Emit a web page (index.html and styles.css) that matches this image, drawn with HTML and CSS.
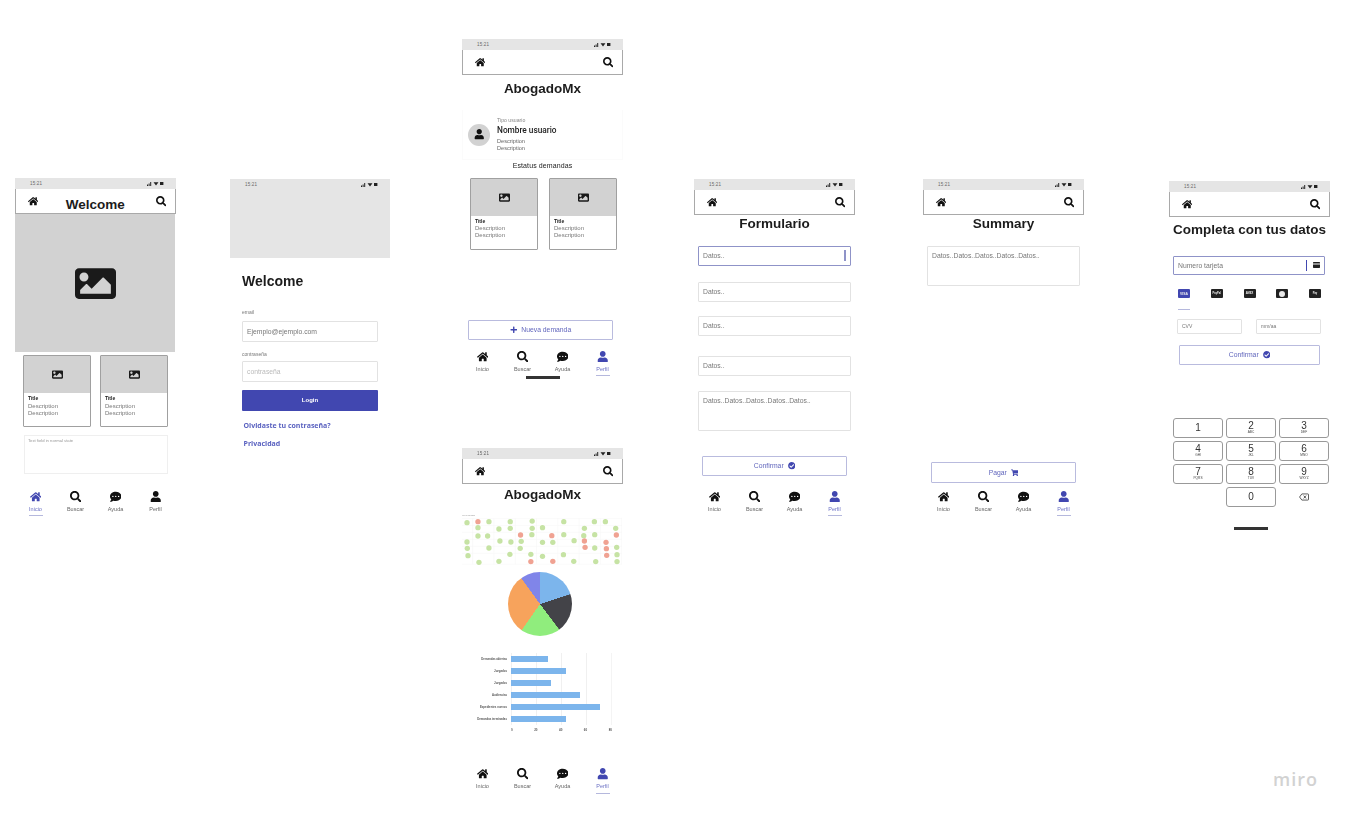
FILE: index.html
```html
<!DOCTYPE html>
<html lang="en">
<head>
    <meta charset="UTF-8">
    <title>AbogadoMx wireframes</title>
    <link rel="stylesheet" href="styles.css">
</head>
<body>
    <!-- icon set, used through <use> below -->
    <svg class="icon-defs">
        <symbol id="i-home" viewBox="0 0 576 512"><path d="M280.37 148.26L96 300.11V464a16 16 0 0 0 16 16l112.06-.29a16 16 0 0 0 15.92-16V368a16 16 0 0 1 16-16h64a16 16 0 0 1 16 16v95.64a16 16 0 0 0 16 16.05L464 480a16 16 0 0 0 16-16V300L295.67 148.26a12.19 12.19 0 0 0-15.3 0zM571.6 251.47L488 182.56V44.05a12 12 0 0 0-12-12h-56a12 12 0 0 0-12 12v72.61L318.47 43a48 48 0 0 0-61 0L4.34 251.47a12 12 0 0 0-1.6 16.9l25.5 31A12 12 0 0 0 45.15 301l235.22-193.74a12.19 12.19 0 0 1 15.3 0L530.9 301a12 12 0 0 0 16.9-1.6l25.5-31a12 12 0 0 0-1.7-16.93z"/></symbol>
        <symbol id="i-search" viewBox="0 0 512 512"><path d="M505 442.7L405.3 343c-4.5-4.5-10.6-7-17-7H372c27.6-35.3 44-79.7 44-128C416 93.1 322.9 0 208 0S0 93.1 0 208s93.1 208 208 208c48.3 0 92.7-16.4 128-44v16.3c0 6.4 2.5 12.5 7 17l99.7 99.7c9.4 9.4 24.6 9.4 33.9 0l28.3-28.3c9.4-9.4 9.4-24.6.1-34zM208 336c-70.7 0-128-57.2-128-128 0-70.7 57.2-128 128-128 70.7 0 128 57.2 128 128 0 70.7-57.2 128-128 128z"/></symbol>
        <symbol id="i-chat" viewBox="0 0 512 512"><path d="M256 32C114.6 32 0 125.1 0 240c0 49.6 21.4 95 57 130.7C44.5 421.1 2.7 466 2.2 466.5c-2.2 2.3-2.8 5.7-1.5 8.7S4.8 480 8 480c66.3 0 116-31.8 140.6-51.4 32.7 12.3 69 19.4 107.4 19.4 141.4 0 256-93.1 256-208S397.4 32 256 32zM128 272c-17.7 0-32-14.3-32-32s14.3-32 32-32 32 14.3 32 32-14.3 32-32 32zm128 0c-17.7 0-32-14.3-32-32s14.3-32 32-32 32 14.3 32 32-14.3 32-32 32zm128 0c-17.7 0-32-14.3-32-32s14.3-32 32-32 32 14.3 32 32-14.3 32-32 32z"/></symbol>
        <symbol id="i-user" viewBox="0 0 448 512"><path d="M224 256c70.7 0 128-57.3 128-128S294.7 0 224 0 96 57.3 96 128s57.3 128 128 128zm89.6 32h-16.7c-22.2 10.2-46.9 16-72.9 16s-50.6-5.8-72.9-16h-16.7C60.2 288 0 348.2 0 422.4V464c0 26.5 21.5 48 48 48h352c26.5 0 48-21.5 48-48v-41.6c0-74.2-60.2-134.4-134.4-134.4z"/></symbol>
        <symbol id="i-image" viewBox="0 0 512 512"><path d="M464 448H48c-26.51 0-48-21.49-48-48V112c0-26.51 21.49-48 48-48h416c26.51 0 48 21.49 48 48v288c0 26.51-21.49 48-48 48zM112 120c-30.928 0-56 25.072-56 56s25.072 56 56 56 56-25.072 56-56-25.072-56-56-56zM64 384h384V272l-87.515-87.515c-4.686-4.686-12.284-4.686-16.971 0L208 320l-55.515-55.515c-4.686-4.686-12.284-4.686-16.971 0L64 336v48z"/></symbol>
        <symbol id="i-plus" viewBox="0 0 448 512"><path d="M416 208H272V64c0-17.67-14.33-32-32-32h-32c-17.67 0-32 14.33-32 32v144H32c-17.67 0-32 14.33-32 32v32c0 17.67 14.33 32 32 32h144v144c0 17.67 14.33 32 32 32h32c17.67 0 32-14.33 32-32V304h144c17.67 0 32-14.33 32-32v-32c0-17.67-14.33-32-32-32z"/></symbol>
        <symbol id="i-check" viewBox="0 0 512 512"><path d="M504 256c0 136.967-111.033 248-248 248S8 392.967 8 256 119.033 8 256 8s248 111.033 248 248zM227.314 387.314l184-184c6.248-6.248 6.248-16.379 0-22.627l-22.627-22.627c-6.248-6.249-16.379-6.249-22.628 0L216 308.118l-70.059-70.059c-6.248-6.248-16.379-6.248-22.628 0l-22.627 22.627c-6.248 6.248-6.248 16.379 0 22.627l104 104c6.249 6.249 16.379 6.249 22.628.001z"/></symbol>
        <symbol id="i-cart" viewBox="0 0 576 512"><path d="M528.12 301.319l47.273-208C578.806 78.301 567.391 64 551.99 64H159.208l-9.166-44.81C147.758 8.021 137.93 0 126.529 0H24C10.745 0 0 10.745 0 24v16c0 13.255 10.745 24 24 24h69.883l70.248 343.435C147.325 417.1 136 435.222 136 456c0 30.928 25.072 56 56 56s56-25.072 56-56c0-15.674-6.447-29.835-16.824-40h209.647C430.447 426.165 424 440.326 424 456c0 30.928 25.072 56 56 56s56-25.072 56-56c0-22.172-12.888-41.332-31.579-50.405l5.517-24.276c3.413-15.018-8.002-29.319-23.403-29.319H218.117l-6.545-32h293.145c11.206 0 20.92-7.754 23.403-18.681z"/></symbol>
        <symbol id="i-status" viewBox="0 0 17 5"><path d="M0 3.5h1V5H0zM1.6 2.5h1V5h-1zM3.2 1h1v4h-1zM6.5 1.2h5L9 4.6zM13 1h3.4v3H13z"/></symbol>
        <symbol id="i-card" viewBox="0 0 12 10"><path d="M1 0h10a1 1 0 0 1 1 1v1.5H0V1a1 1 0 0 1 1-1zM0 4h12v5a1 1 0 0 1-1 1H1a1 1 0 0 1-1-1z"/></symbol>
        <symbol id="i-backspace" viewBox="0 0 14 10"><path class="backspace-line" d="M4 .7h8.5a.8.8 0 0 1 .8.8v7a.8.8 0 0 1-.8.8H4L.8 5z"/><path class="backspace-line" d="M6.5 3l3.5 4M10 3L6.5 7"/></symbol>
    </svg>

    <!-- Home -->
    <section class="frame frame-home">
        <div class="status-bar"><span>15:21</span><svg class="status-icons"><use href="#i-status"/></svg></div>
        <header class="app-header">
            <svg class="icon"><use href="#i-home"/></svg>
            <h1 class="screen-title screen-title-inline">Welcome</h1>
            <svg class="icon"><use href="#i-search"/></svg>
        </header>
        <div class="hero"><svg class="hero-icon"><use href="#i-image"/></svg></div>
        <div class="card-row card-row-home">
            <article class="card">
                <div class="card-thumb"><svg class="thumb-icon"><use href="#i-image"/></svg></div>
                <h4>Title</h4><p>Description</p><p>Description</p>
            </article>
            <article class="card">
                <div class="card-thumb"><svg class="thumb-icon"><use href="#i-image"/></svg></div>
                <h4>Title</h4><p>Description</p><p>Description</p>
            </article>
        </div>
        <div class="note-field">Text field in normal state</div>
        <nav class="tab-bar tab-bar-home">
            <div class="tab tab-active"><svg class="icon"><use href="#i-home"/></svg><span>Inicio</span></div>
            <div class="tab"><svg class="icon"><use href="#i-search"/></svg><span>Buscar</span></div>
            <div class="tab"><svg class="icon"><use href="#i-chat"/></svg><span>Ayuda</span></div>
            <div class="tab"><svg class="icon"><use href="#i-user"/></svg><span>Perfil</span></div>
        </nav>
    </section>

    <!-- Login -->
    <section class="frame frame-login">
        <div class="login-banner">
            <div class="status-bar"><span>15:21</span><svg class="status-icons"><use href="#i-status"/></svg></div>
        </div>
        <form class="login-form">
            <h1 class="screen-title login-title">Welcome</h1>
            <label class="login-label login-label-first">email</label>
            <div class="login-input">Ejemplo@ejemplo.com</div>
            <label class="login-label">contraseña</label>
            <div class="login-input login-input-empty">contraseña</div>
            <div class="login-button">Login</div>
            <a class="login-link">Olvidaste tu contraseña?</a>
            <a class="login-link">Privacidad</a>
        </form>
    </section>

    <!-- Profile -->
    <section class="frame frame-profile">
        <div class="status-bar"><span>15:21</span><svg class="status-icons"><use href="#i-status"/></svg></div>
        <header class="app-header">
            <svg class="icon"><use href="#i-home"/></svg>
            <svg class="icon"><use href="#i-search"/></svg>
        </header>
        <h1 class="screen-title title-profile">AbogadoMx</h1>
        <div class="profile">
            <div class="avatar"><svg class="icon"><use href="#i-user"/></svg></div>
            <div>
                <div class="profile-type">Tipo usuario</div>
                <div class="profile-name">Nombre usuario</div>
                <p class="profile-text">Description</p>
                <p class="profile-text">Description</p>
            </div>
        </div>
        <h3 class="status-heading">Estatus demandas</h3>
        <div class="card-row card-row-profile">
            <article class="card">
                <div class="card-thumb"><svg class="thumb-icon"><use href="#i-image"/></svg></div>
                <h4>Title</h4><p>Description</p><p>Description</p>
            </article>
            <article class="card">
                <div class="card-thumb"><svg class="thumb-icon"><use href="#i-image"/></svg></div>
                <h4>Title</h4><p>Description</p><p>Description</p>
            </article>
        </div>
        <div class="outline-btn btn-new"><svg class="btn-icon"><use href="#i-plus"/></svg>Nueva demanda</div>
        <nav class="tab-bar tab-bar-profile">
            <div class="tab"><svg class="icon"><use href="#i-home"/></svg><span>Inicio</span></div>
            <div class="tab"><svg class="icon"><use href="#i-search"/></svg><span>Buscar</span></div>
            <div class="tab"><svg class="icon"><use href="#i-chat"/></svg><span>Ayuda</span></div>
            <div class="tab tab-active"><svg class="icon"><use href="#i-user"/></svg><span>Perfil</span></div>
        </nav>
        <div class="home-bar home-bar-profile"></div>
    </section>

    <!-- Stats -->
    <section class="frame frame-stats">
        <div class="status-bar"><span>15:21</span><svg class="status-icons"><use href="#i-status"/></svg></div>
        <header class="app-header">
            <svg class="icon"><use href="#i-home"/></svg>
            <svg class="icon"><use href="#i-search"/></svg>
        </header>
        <h1 class="screen-title title-stats">AbogadoMx</h1>
        <svg class="scatter" viewBox="37 225 481 150">
            <text class="scatter-title" x="38" y="229">Demandas</text>
            <path class="scatter-grid" d="M37 235H518M37 256H518M37 277H518M37 298H518M37 319H518M37 340H518M37 373H518M69 235V373M133 235V373M197 235V373M261 235V373M325 235V373M389 235V373M453 235V373M517 235V373"/>
            <g class="dots-ok">
                <circle cx="52" cy="248" r="8"/><circle cx="118" cy="245" r="8"/><circle cx="182" cy="245" r="8"/><circle cx="248" cy="243" r="8"/><circle cx="343" cy="245" r="8"/><circle cx="435" cy="245" r="8"/><circle cx="468" cy="245" r="8"/>
                <circle cx="85" cy="263" r="8"/><circle cx="148" cy="267" r="8"/><circle cx="182" cy="265" r="8"/><circle cx="248" cy="265" r="8"/><circle cx="279" cy="263" r="8"/><circle cx="405" cy="265" r="8"/><circle cx="499" cy="265" r="8"/>
                <circle cx="85" cy="288" r="8"/><circle cx="114" cy="288" r="8"/><circle cx="247" cy="284" r="8"/><circle cx="343" cy="284" r="8"/><circle cx="403" cy="287" r="8"/><circle cx="436" cy="284" r="8"/>
                <circle cx="52" cy="306" r="8"/><circle cx="151" cy="303" r="8"/><circle cx="184" cy="306" r="8"/><circle cx="215" cy="304" r="8"/><circle cx="279" cy="307" r="8"/><circle cx="310" cy="307" r="8"/><circle cx="374" cy="302" r="8"/>
                <circle cx="53" cy="325" r="8"/><circle cx="118" cy="324" r="8"/><circle cx="212" cy="325" r="8"/><circle cx="436" cy="324" r="8"/><circle cx="502" cy="322" r="8"/>
                <circle cx="55" cy="347" r="8"/><circle cx="181" cy="343" r="8"/><circle cx="244" cy="343" r="8"/><circle cx="279" cy="349" r="8"/><circle cx="342" cy="344" r="8"/><circle cx="503" cy="344" r="8"/>
                <circle cx="88" cy="367" r="8"/><circle cx="148" cy="364" r="8"/><circle cx="373" cy="364" r="8"/><circle cx="439" cy="365" r="8"/><circle cx="503" cy="365" r="8"/>
            </g>
            <g class="dots-late">
                <circle cx="85" cy="245" r="8"/><circle cx="213" cy="285" r="8"/><circle cx="307" cy="287" r="8"/><circle cx="501" cy="285" r="8"/><circle cx="405" cy="303" r="8"/><circle cx="470" cy="307" r="8"/><circle cx="407" cy="322" r="8"/><circle cx="471" cy="326" r="8"/><circle cx="472" cy="346" r="8"/><circle cx="244" cy="365" r="8"/><circle cx="310" cy="364" r="8"/>
            </g>
        </svg>
        <div class="pie"></div>
        <div class="bar-chart">
            <div class="bar-labels">
                <span>Demandas abiertas</span>
                <span>Juzgados</span>
                <span>Juzgados</span>
                <span>Audiencias</span>
                <span>Expedientes nuevos</span>
                <span>Demandas terminadas</span>
            </div>
            <div class="bar-plot">
                <div class="bar" style="width: 37px"></div>
                <div class="bar" style="width: 55px"></div>
                <div class="bar" style="width: 40px"></div>
                <div class="bar" style="width: 69px"></div>
                <div class="bar" style="width: 89px"></div>
                <div class="bar" style="width: 55px"></div>
            </div>
            <div class="bar-ticks"><span>0</span><span>20</span><span>40</span><span>60</span><span>80</span></div>
        </div>
        <nav class="tab-bar tab-bar-stats">
            <div class="tab"><svg class="icon"><use href="#i-home"/></svg><span>Inicio</span></div>
            <div class="tab"><svg class="icon"><use href="#i-search"/></svg><span>Buscar</span></div>
            <div class="tab"><svg class="icon"><use href="#i-chat"/></svg><span>Ayuda</span></div>
            <div class="tab tab-active"><svg class="icon"><use href="#i-user"/></svg><span>Perfil</span></div>
        </nav>
    </section>

    <!-- Form -->
    <section class="frame frame-form">
        <div class="status-bar"><span>15:21</span><svg class="status-icons"><use href="#i-status"/></svg></div>
        <header class="app-header">
            <svg class="icon"><use href="#i-home"/></svg>
            <svg class="icon"><use href="#i-search"/></svg>
        </header>
        <h1 class="screen-title title-form">Formulario</h1>
        <div class="field field-active field-one">Datos..<span class="caret"></span></div>
        <div class="field field-two">Datos..</div>
        <div class="field field-three">Datos..</div>
        <div class="field field-four">Datos..</div>
        <div class="field field-area field-five">Datos..Datos..Datos..Datos..Datos..</div>
        <div class="outline-btn btn-confirm">Confirmar<svg class="btn-icon"><use href="#i-check"/></svg></div>
        <nav class="tab-bar tab-bar-form">
            <div class="tab"><svg class="icon"><use href="#i-home"/></svg><span>Inicio</span></div>
            <div class="tab"><svg class="icon"><use href="#i-search"/></svg><span>Buscar</span></div>
            <div class="tab"><svg class="icon"><use href="#i-chat"/></svg><span>Ayuda</span></div>
            <div class="tab tab-active"><svg class="icon"><use href="#i-user"/></svg><span>Perfil</span></div>
        </nav>
    </section>

    <!-- Summary -->
    <section class="frame frame-summary">
        <div class="status-bar"><span>15:21</span><svg class="status-icons"><use href="#i-status"/></svg></div>
        <header class="app-header">
            <svg class="icon"><use href="#i-home"/></svg>
            <svg class="icon"><use href="#i-search"/></svg>
        </header>
        <h1 class="screen-title title-form">Summary</h1>
        <div class="field field-area field-one">Datos..Datos..Datos..Datos..Datos..</div>
        <div class="outline-btn btn-pay">Pagar<svg class="btn-icon"><use href="#i-cart"/></svg></div>
        <nav class="tab-bar tab-bar-summary">
            <div class="tab"><svg class="icon"><use href="#i-home"/></svg><span>Inicio</span></div>
            <div class="tab"><svg class="icon"><use href="#i-search"/></svg><span>Buscar</span></div>
            <div class="tab"><svg class="icon"><use href="#i-chat"/></svg><span>Ayuda</span></div>
            <div class="tab tab-active"><svg class="icon"><use href="#i-user"/></svg><span>Perfil</span></div>
        </nav>
    </section>

    <!-- Payment -->
    <section class="frame frame-payment">
        <div class="status-bar"><span>15:21</span><svg class="status-icons"><use href="#i-status"/></svg></div>
        <header class="app-header">
            <svg class="icon"><use href="#i-home"/></svg>
            <svg class="icon"><use href="#i-search"/></svg>
        </header>
        <h1 class="screen-title title-payment">Completa con tus datos</h1>
        <div class="field field-active field-card">Numero tarjeta<span class="caret caret-card"></span><svg class="card-icon"><use href="#i-card"/></svg></div>
        <div class="pay-methods">
            <div class="pay-method pay-method-active"><span class="pay-logo pay-logo-visa">VISA</span></div>
            <div class="pay-method"><span class="pay-logo">PayPal</span></div>
            <div class="pay-method"><span class="pay-logo">AMEX</span></div>
            <div class="pay-method"><span class="pay-logo"><i class="mc-ring"></i></span></div>
            <div class="pay-method"><span class="pay-logo">Pay</span></div>
        </div>
        <div class="card-extra">
            <div class="field field-small">CVV</div>
            <div class="field field-small">mm/aa</div>
        </div>
        <div class="outline-btn btn-card">Confirmar<svg class="btn-icon"><use href="#i-check"/></svg></div>
        <div class="keypad">
            <div class="key">1</div>
            <div class="key">2<small>ABC</small></div>
            <div class="key">3<small>DEF</small></div>
            <div class="key">4<small>GHI</small></div>
            <div class="key">5<small>JKL</small></div>
            <div class="key">6<small>MNO</small></div>
            <div class="key">7<small>PQRS</small></div>
            <div class="key">8<small>TUV</small></div>
            <div class="key">9<small>WXYZ</small></div>
            <div class="key-blank"></div>
            <div class="key">0</div>
            <div class="key-blank"><svg class="backspace"><use href="#i-backspace"/></svg></div>
        </div>
        <div class="home-bar home-bar-payment"></div>
    </section>

    <div class="miro-logo">miro</div>
</body>
</html>
```

FILE: styles.css
```css
* {
    box-sizing: border-box;
    margin: 0;
    padding: 0;
}

body {
    position: relative;
    width: 1348px;
    height: 817px;
    overflow: hidden;
    background: #ffffff;
    font-family: "Liberation Sans", Arial, sans-serif;
    color: #1a1a1a;
}

.icon-defs {
    display: none;
}

/* frames sit on a free board, so these are the only pixel offsets.
   the board is zoomed out, everything on it is a little soft */
.frame {
    position: absolute;
    width: 161px;
    filter: blur(.3px);
}

.frame-home { left: 15px; top: 178px; }
.frame-login { left: 230px; top: 179px; }
.frame-profile { left: 462px; top: 39px; }
.frame-stats { left: 462px; top: 448px; }
.frame-form { left: 694px; top: 179px; }
.frame-summary { left: 923px; top: 179px; }
.frame-payment { left: 1169px; top: 181px; }

.status-bar {
    display: flex;
    justify-content: space-between;
    align-items: center;
    height: 11px;
    padding: 0 12px 0 15px;
    background: #e5e5e5;
    font-size: 4.5px;
    letter-spacing: .2px;
    color: #666;
}

.status-icons {
    width: 17px;
    height: 5px;
    fill: #222;
}

.app-header {
    display: flex;
    justify-content: space-between;
    align-items: center;
    height: 25px;
    padding: 1px 9px 0 11.5px;
    background: #fff;
    border: 1px solid #a9a9a9;
    border-top: none;
}

.icon {
    width: 10.5px;
    height: 10.5px;
    fill: #111;
}

.screen-title {
    font-size: 13.5px;
    line-height: 16px;
    font-weight: bold;
    text-align: center;
    color: #1c1c1c;
}

.screen-title-inline {
    margin: 7px 3px 0 0;
}

.title-profile { margin-top: 6px; }
.title-stats { margin-top: 3px; }
.title-form { margin-top: 1px; }
.title-payment { margin-top: 5px; }

/* home */
.hero {
    display: flex;
    justify-content: center;
    align-items: center;
    width: 160px;
    height: 138px;
    background: #d2d2d2;
}

.hero-icon {
    width: 41px;
    height: 41px;
    fill: #1a1a1a;
}

.card-row {
    display: flex;
}

.card-row-home {
    gap: 9px;
    margin: 3px 0 0 8px;
}

.card-row-profile {
    gap: 11px;
    margin: 9px 0 0 8px;
}

.card {
    width: 68px;
    height: 72px;
    background: #fff;
    border: 1px solid #a0a0a0;
    border-radius: 1px;
    font-size: 6px;
    line-height: 7px;
    color: #777;
}

.card-thumb {
    display: flex;
    justify-content: center;
    align-items: center;
    height: 37px;
    background: #d2d2d2;
}

.thumb-icon {
    width: 11px;
    height: 11px;
    fill: #1a1a1a;
}

.card h4 {
    margin: 2px 0 1.5px 4px;
    font-size: 5px;
    line-height: 6px;
    color: #222;
}

.card p {
    margin-left: 4px;
}

.note-field {
    width: 144px;
    height: 39px;
    margin: 8px 0 0 9px;
    padding: 2px 3px;
    border: 1px solid #efefef;
    font-size: 4.2px;
    line-height: 5px;
    color: #999;
}

/* bottom tabs */
.tab-bar {
    display: grid;
    grid-template-columns: repeat(4, 40px);
    height: 26px;
    padding-left: .5px;
}

.tab-bar-home { margin-top: 16.5px; }
.tab-bar-profile { margin-top: 11px; }
.tab-bar-stats { margin-top: 35px; }
.tab-bar-form { margin-top: 14.5px; }
.tab-bar-summary { margin-top: 7.5px; }

.tab {
    display: flex;
    flex-direction: column;
    align-items: center;
}

.tab .icon {
    width: 11.5px;
    height: 11.5px;
}

.tab span {
    margin-top: 4.5px;
    padding-bottom: 3.5px;
    border-bottom: 1px solid transparent;
    min-width: 14px;
    font-size: 5.5px;
    line-height: 5px;
    text-align: center;
    color: #666;
}

.tab-active .icon {
    fill: #4147b0;
}

.tab-active span {
    color: #6a70c4;
    border-bottom-color: #b5b8dd;
}

.home-bar {
    width: 34px;
    height: 2.5px;
    background: #333;
}

.home-bar-profile { margin: -.5px 0 0 64px; }
.home-bar-payment { margin: 20px 0 0 65px; }

/* login */
.login-banner {
    width: 160px;
    height: 79px;
    background: #e5e5e5;
}

.login-form {
    display: flex;
    flex-direction: column;
    width: 136px;
    margin-left: 12px;
}

.login-title {
    margin-top: 15px;
    text-align: left;
    font-size: 14px;
}

.login-label {
    margin-top: 9px;
    font-size: 5px;
    line-height: 7px;
    color: #777;
}

.login-label-first {
    margin-top: 20px;
}

.login-input {
    height: 21px;
    margin-top: 5px;
    padding-left: 4px;
    border: 1px solid #e2e2e2;
    border-radius: 1px;
    font-size: 6.8px;
    line-height: 19px;
    color: #777;
}

.login-input-empty {
    margin-top: 3px;
    color: #bbb;
}

.login-button {
    height: 21px;
    margin-top: 8px;
    border-radius: 1px;
    background: #4147b0;
    font-size: 6px;
    font-weight: bold;
    line-height: 21px;
    text-align: center;
    color: #fff;
}

.login-link {
    margin: 9px 0 0 1.5px;
    font-family: "Open Sans", sans-serif;
    font-size: 7px;
    font-weight: 700;
    line-height: 9px;
    color: #5a62c0;
}

.login-link:first-of-type {
    margin-top: 10px;
}

/* profile */
.profile {
    display: flex;
    align-items: center;
    height: 50px;
    margin-top: 13px;
    padding-left: 5px;
    border: 1px solid #fbfbfb;
    border-top: none;
}

.avatar {
    display: flex;
    justify-content: center;
    align-items: center;
    width: 22px;
    height: 22px;
    margin-right: 7px;
    border-radius: 50%;
    background: #d2d2d2;
}

.profile-type {
    font-size: 5.2px;
    line-height: 5px;
    color: #888;
}

.profile-name {
    margin-top: 2px;
    font-family: Roboto, sans-serif;
    font-size: 8.3px;
    font-weight: 500;
    line-height: 11px;
    color: #222;
}

.profile-text {
    font-size: 5.6px;
    line-height: 7px;
    color: #666;
}

.profile-name + .profile-text {
    margin-top: 2px;
}

.status-heading {
    margin-top: 1.5px;
    font-size: 7px;
    font-weight: normal;
    letter-spacing: .1px;
    line-height: 7px;
    text-align: center;
    color: #222;
}

/* buttons */
.outline-btn {
    display: flex;
    justify-content: center;
    align-items: center;
    gap: 4px;
    padding-bottom: 1px;
    border: 1px solid #b9bbde;
    border-radius: 1px;
    font-size: 6.8px;
    color: #6267bd;
}

.btn-icon {
    width: 7.5px;
    height: 7.5px;
    margin-top: 1px;
    fill: #4147b0;
}

.btn-new {
    width: 145px;
    height: 20px;
    margin: 70px 0 0 6px;
}

.btn-confirm {
    width: 145px;
    height: 20px;
    margin: 25px 0 0 8px;
}

.btn-pay {
    width: 145px;
    height: 21px;
    margin: 176px 0 0 8px;
}

.btn-card {
    width: 141px;
    height: 20px;
    margin: 11px 0 0 10px;
}

/* form fields */
.field {
    display: flex;
    align-items: center;
    width: 153px;
    height: 20px;
    margin-left: 4px;
    padding: 0 4px 1px;
    border: 1px solid #e2e2e2;
    border-radius: 1px;
    font-size: 6.8px;
    color: #777;
}

.field-active {
    justify-content: space-between;
    border-color: #8f93c8;
}

.field-area {
    align-items: flex-start;
    height: 40px;
    padding-top: 5px;
    line-height: 8px;
}

.field-one { margin-top: 14px; }
.field-two { margin-top: 16px; }
.field-three { margin-top: 14px; }
.field-four { margin-top: 20px; }
.field-five { margin-top: 15px; }

.caret {
    width: 2px;
    height: 11px;
    background: #8f93c8;
}

.field-card {
    width: 152px;
    height: 19px;
    margin-top: 18px;
    padding-right: 4px;
}

.caret-card {
    width: 1px;
    margin-left: auto;
    margin-right: 6px;
    background: #4147b0;
}

.card-icon {
    width: 7px;
    height: 6px;
    fill: #222;
}

/* charts */
.scatter {
    display: block;
    width: 160px;
    height: 50px;
    margin-top: 12px;
}

.scatter-title {
    font-family: "Liberation Sans", sans-serif;
    font-size: 8px;
    fill: #999;
}

.scatter-grid {
    fill: none;
    stroke: #f5f5f5;
    stroke-width: 1.5;
}

.dots-ok { fill: #c6e3a4; }
.dots-late { fill: #f0a292; }

.pie {
    width: 64px;
    height: 64px;
    margin: 7px 0 0 46px;
    border-radius: 50%;
    background: conic-gradient(#7cb5ec 0 71.6deg, #434348 72.4deg 142.6deg, #90ed7d 143.4deg 214.6deg, #f7a35c 215.4deg 323.6deg, #8085e9 324.4deg 359.4deg, #7cb5ec 360deg);
}

.bar-chart {
    display: grid;
    grid-template-columns: 45px 101px;
    column-gap: 4px;
    margin-top: 14px;
    padding-top: 3px;
}

.bar-labels {
    display: flex;
    flex-direction: column;
    align-items: flex-end;
}

.bar-labels span {
    height: 12px;
    font-size: 2.8px;
    font-weight: bold;
    line-height: 12px;
    color: #555;
    white-space: nowrap;
}

.bar-plot {
    display: flex;
    flex-direction: column;
    background: repeating-linear-gradient(to right, #f0f0f0 0 .6px, transparent .6px 25px);
    border-right: 1px solid #f4f4f4;
}

.bar {
    height: 5.5px;
    margin: 3.25px 0;
    background: #7cb5ec;
}

.bar-ticks {
    grid-column: 2;
    display: flex;
    justify-content: space-between;
    height: 8px;
    font-size: 3px;
    font-weight: bold;
    line-height: 10px;
    color: #555;
}

/* payment */
.pay-methods {
    display: flex;
    gap: 20.75px;
    margin: 14px 0 0 9px;
}

.pay-method {
    width: 12px;
    height: 21px;
}

.pay-method-active {
    border-bottom: 1px solid #b5b8dd;
}

.pay-logo {
    display: flex;
    justify-content: center;
    align-items: center;
    width: 12px;
    height: 9px;
    border-radius: 1px;
    background: #222;
    font-size: 2.6px;
    font-weight: bold;
    color: #eee;
}

.pay-logo-visa {
    background: #4147b0;
    font-size: 3.4px;
}

.mc-ring {
    width: 6px;
    height: 6px;
    border-radius: 50%;
    background: #e8e8e8;
}

.card-extra {
    display: flex;
    gap: 14px;
    margin: 9px 0 0 8px;
}

.field-small {
    width: 65px;
    height: 15px;
    margin-left: 0;
    font-size: 5px;
}

.keypad {
    display: grid;
    grid-template-columns: repeat(3, 50px);
    grid-auto-rows: 20px;
    gap: 3px;
    margin: 53px 0 0 4px;
}

.key,
.key-blank {
    display: flex;
    flex-direction: column;
    justify-content: center;
    align-items: center;
    font-size: 10px;
    line-height: 10px;
    color: #333;
}

.key {
    border: 1px solid #999;
    border-radius: 3px;
}

.key small {
    font-size: 3.2px;
    line-height: 3.5px;
    color: #444;
}

.backspace {
    width: 10px;
    height: 8px;
}

.backspace-line {
    fill: none;
    stroke: #333;
    stroke-width: 1.1;
}

.miro-logo {
    position: absolute;
    left: 1273px;
    top: 766px;
    font-family: "Open Sans", sans-serif;
    font-size: 18px;
    font-weight: 600;
    line-height: 26px;
    letter-spacing: 1px;
    color: #d2d2d2;
}
```
